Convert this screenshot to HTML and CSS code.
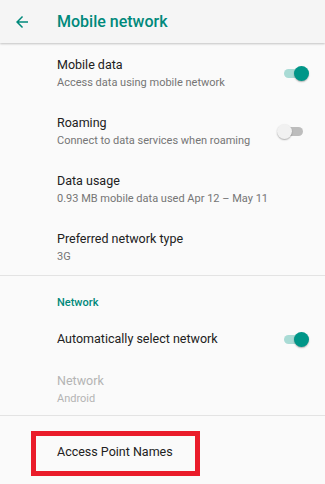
FILE: index.html
```html
<!DOCTYPE html>
<html lang="en">
<head>
<meta charset="utf-8">
<title>Mobile network</title>
<link rel="stylesheet" href="styles.css">
</head>
<body>
<header class="appbar">
  <svg class="back" viewBox="0 0 24 24" width="18" height="18" aria-hidden="true">
    <path d="M20 11H7.83l5.59-5.59L12 4l-8 8 8 8 1.41-1.41L7.83 13H20v-2z" fill="currentColor"/>
  </svg>
  <h1 class="appbar-title">Mobile network</h1>
</header>
<main class="list">
  <div class="pref two-line">
    <div class="pref-text">
      <div class="pref-title">Mobile data</div>
      <div class="pref-summary">Access data using mobile network</div>
    </div>
    <span class="switch on"><span class="track"></span><span class="thumb"></span></span>
  </div>
  <div class="pref two-line">
    <div class="pref-text">
      <div class="pref-title">Roaming</div>
      <div class="pref-summary">Connect to data services when roaming</div>
    </div>
    <span class="switch"><span class="track"></span><span class="thumb"></span></span>
  </div>
  <div class="pref two-line">
    <div class="pref-text">
      <div class="pref-title">Data usage</div>
      <div class="pref-summary">0.93 MB mobile data used Apr 12 – May 11</div>
    </div>
  </div>
  <div class="pref two-line">
    <div class="pref-text">
      <div class="pref-title">Preferred network type</div>
      <div class="pref-summary">3G</div>
    </div>
  </div>
  <div class="divider"></div>
  <div class="category">Network</div>
  <div class="pref one-line">
    <div class="pref-text">
      <div class="pref-title">Automatically select network</div>
    </div>
    <span class="switch on"><span class="track"></span><span class="thumb"></span></span>
  </div>
  <div class="pref disabled-row">
    <div class="pref-text">
      <div class="pref-title">Network</div>
      <div class="pref-summary">Android</div>
    </div>
  </div>
  <div class="divider"></div>
  <div class="pref apn-row">
    <div class="pref-title highlight">Access Point Names</div>
  </div>
</main>
</body>
</html>
```
FILE: styles.css
```css
html, body {
  margin: 0;
  padding: 0;
}
body {
  background: #fafafa;
  font-family: Roboto, "Noto Sans", "Liberation Sans", sans-serif;
  width: 325px;
  height: 484px;
  overflow: hidden;
}
.appbar {
  height: 43px;
  background: #f5f5f5;
  display: flex;
  align-items: center;
  padding-left: 13px;
  box-shadow: 0 1px 2px rgba(0, 0, 0, 0.22);
  position: relative;
  z-index: 1;
  color: #00897b;
}
.back {
  display: block;
  flex: none;
}
.appbar-title {
  margin: 0 0 0 26px;
  font-size: 16px;
  font-weight: 500;
  line-height: 20px;
  color: #00897b;
}
.list {
  display: flex;
  flex-direction: column;
}
.pref {
  display: flex;
  align-items: center;
  padding-left: 57px;
  padding-right: 16px;
}
.pref-text {
  flex: 1;
  min-width: 0;
}
.pref-title {
  font-size: 12.5px;
  line-height: 20px;
  color: #212121;
}
.pref-summary {
  font-size: 11px;
  line-height: 16px;
  color: #757575;
}
.two-line {
  padding-top: 12px;
  padding-bottom: 10px;
}
.one-line {
  padding-top: 18px;
  padding-bottom: 12px;
}
.disabled-row {
  padding-top: 10px;
  padding-bottom: 8px;
}
.disabled-row .pref-title,
.disabled-row .pref-summary {
  color: #b4b4b4;
}
.divider {
  height: 1px;
  background: #e3e3e3;
}
.category {
  padding: 19px 0 0 57px;
  font-size: 11px;
  line-height: 16px;
  font-weight: 500;
  color: #00897b;
}
.switch {
  position: relative;
  width: 32px;
  height: 15px;
  flex: none;
}
.switch .track {
  position: absolute;
  left: 7px;
  top: 3px;
  width: 19px;
  height: 9px;
  border-radius: 5px;
  background: #bdbdbd;
}
.switch .thumb {
  position: absolute;
  left: 0;
  top: 0;
  width: 15px;
  height: 15px;
  border-radius: 50%;
  background: #f1f1f1;
  box-shadow: 0 1px 1.5px rgba(0, 0, 0, 0.3);
}
.switch.on .track {
  background: #a9dbd5;
}
.switch.on .thumb {
  left: 17px;
  background: #009688;
}
.apn-row {
  padding-left: 31px;
  padding-top: 15px;
}
.highlight {
  border: 5px solid #ea1c2a;
  padding: 6px 21px 9px 21px;
  width: 117px;
}
```
